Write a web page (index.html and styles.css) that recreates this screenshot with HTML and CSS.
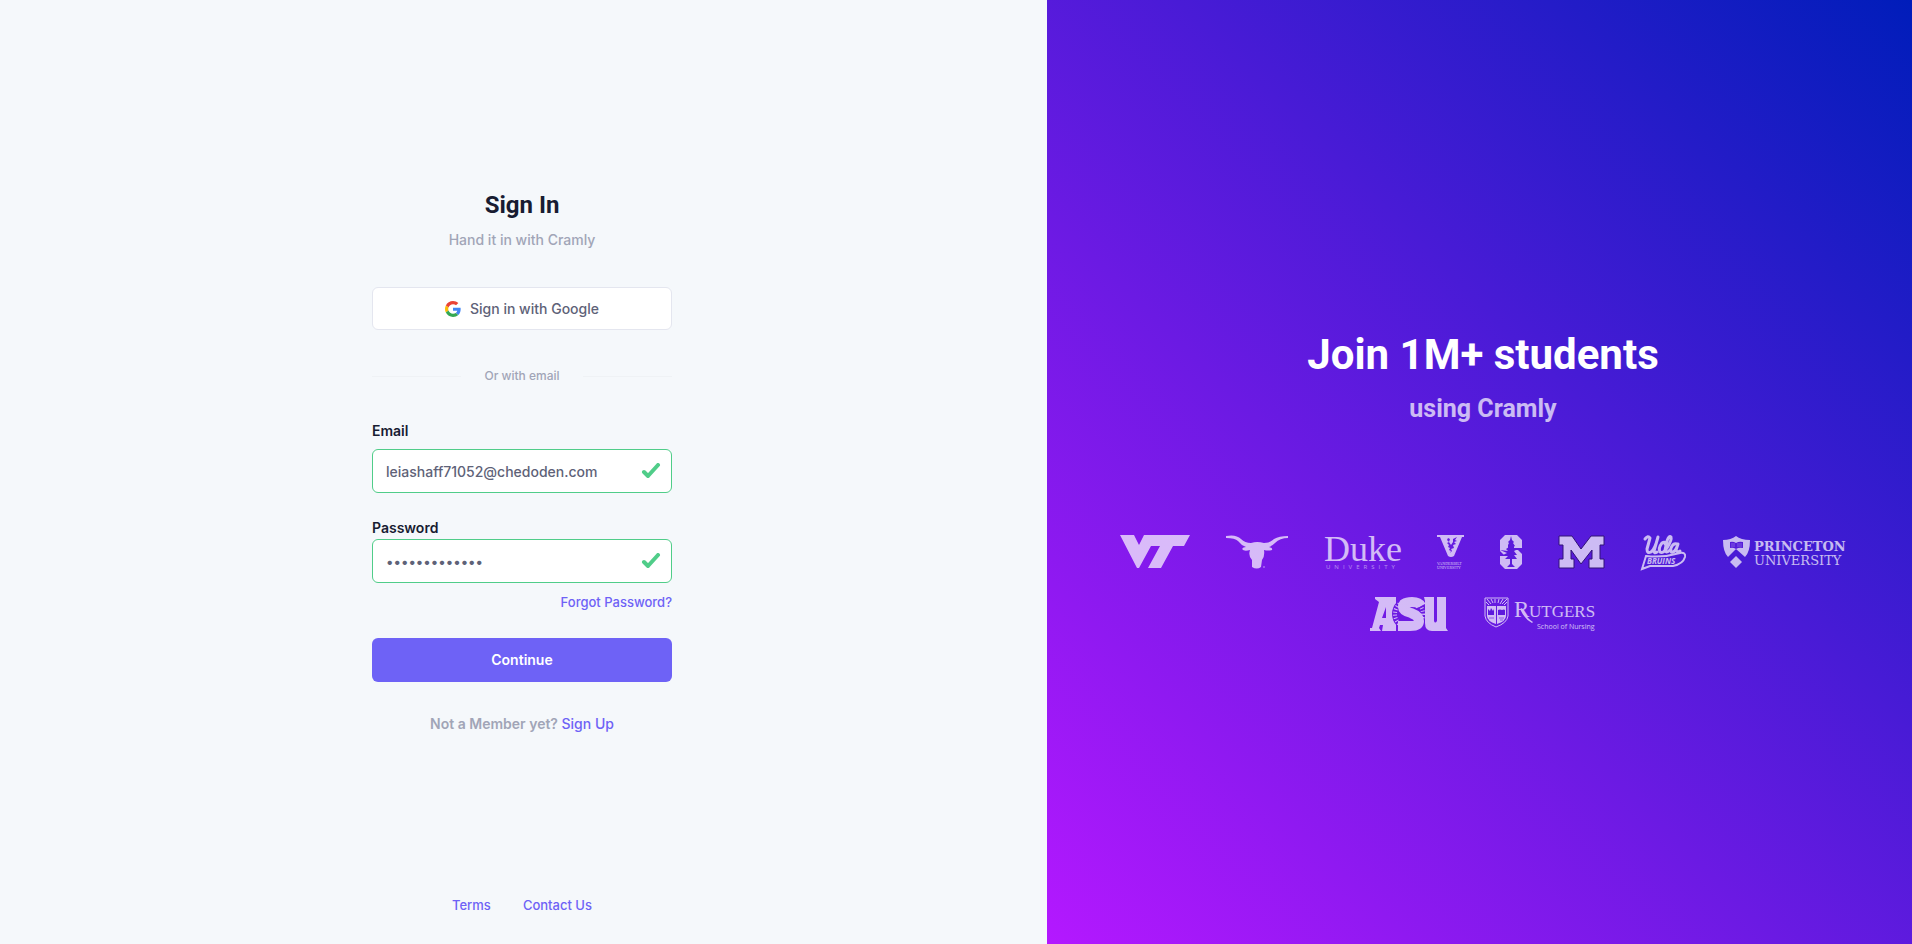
FILE: index.html
```
<!DOCTYPE html>
<html lang="en">

<head>
  <meta charset="UTF-8">
  <meta name="viewport" content="width=device-width, initial-scale=1">
  <title>Cramly - Sign In</title>
  <link rel="stylesheet" href="styles.css">
</head>

<body>
  <main class="auth">
    <section class="form-side">
      <form class="sign-in">
        <h1 class="title">Sign In</h1>
        <p class="subtitle">Hand it in with Cramly</p>

        <button type="button" class="btn btn-google">
          <svg class="google-icon" viewBox="0 0 48 48">
            <path fill="#EA4335" d="M24 9.5c3.54 0 6.71 1.22 9.21 3.6l6.85-6.85C35.9 2.38 30.47 0 24 0 14.62 0 6.51 5.38 2.56 13.22l7.98 6.19C12.43 13.72 17.74 9.5 24 9.5z"/>
            <path fill="#4285F4" d="M46.98 24.55c0-1.57-.15-3.09-.38-4.55H24v9.02h12.94c-.58 2.96-2.26 5.48-4.78 7.18l7.73 6c4.51-4.18 7.09-10.36 7.09-17.65z"/>
            <path fill="#FBBC05" d="M10.53 28.59c-.48-1.45-.76-2.99-.76-4.59s.27-3.14.76-4.59l-7.98-6.19C.92 16.46 0 20.12 0 24c0 3.88.92 7.54 2.56 10.78l7.97-6.19z"/>
            <path fill="#34A853" d="M24 48c6.48 0 11.93-2.13 15.89-5.81l-7.73-6c-2.15 1.45-4.92 2.3-8.16 2.3-6.26 0-11.57-4.22-13.47-9.91l-7.98 6.19C6.51 42.62 14.62 48 24 48z"/>
          </svg>
          Sign in with Google
        </button>

        <div class="separator">Or with email</div>

        <div class="field">
          <label for="email">Email</label>
          <div class="control">
            <input type="email" id="email" value="leiashaff71052@chedoden.com">
            <svg class="check" viewBox="0 0 20 16"><path d="M3 9L7 13L17 2"/></svg>
          </div>
        </div>

        <div class="field field-password">
          <label for="password">Password</label>
          <div class="control">
            <input type="password" id="password" value="abcdefghijklm">
            <svg class="check" viewBox="0 0 20 16"><path d="M3 9L7 13L17 2"/></svg>
          </div>
        </div>

        <a class="forgot" href="#">Forgot Password?</a>
        <button type="submit" class="btn btn-primary">Continue</button>
        <p class="member">Not a Member yet? <a href="#">Sign Up</a></p>
      </form>

      <footer class="links">
        <a href="#">Terms</a>
        <a href="#">Contact Us</a>
      </footer>
    </section>

    <section class="promo">
      <h2 class="promo-title">Join 1M+ students</h2>
      <p class="promo-sub">using Cramly</p>

      <div class="logos">
        <!-- Virginia Tech -->
        <svg width="70" height="34" viewBox="0 0 70 34">
          <path d="M0 0H14L19 10L24 0H70L64 11H53L41 33H28L40 11H31L19 33H17Z"/>
        </svg>

        <!-- Texas -->
        <svg width="62" height="35" viewBox="0 0 62 35">
          <path d="M0 1Q10-1 15 4Q19 8 25 8Q31 6 38 8Q44 8 48 4Q53 1 62 1V3Q54 3 49 8Q46 11 43 12Q47 13 46 15Q42 16 38 15Q39 21 36 25L35 32Q31 35 26 32L26 25Q22 21 24 15Q18 17 16 14Q17 12 20 12Q15 10 12 6Q9 3 0 3Z"/>
          <circle cx="38" cy="32" r="1" opacity=".5"/>
        </svg>

        <!-- Duke -->
        <svg width="77" height="36" viewBox="0 0 77 36">
          <text class="serif" x="0" y="26" font-size="36">Duke</text>
          <text class="sans tracked" x="2" y="34" font-size="6">UNIVERSITY</text>
        </svg>

        <!-- Vanderbilt -->
        <svg width="27" height="35" viewBox="0 0 27 35">
          <path fill-rule="evenodd" d="M0 0H27V2H25L17 21Q14 23 11 21L3 2H0ZM11 3L10 5L12 7L10 8L12 10L11 12L13 13L12 15L14 16L13 18L15 16L14 14L17 13L16 10L19 9L17 7L20 6L18 5L20 2L16 4L16 7L14 10L12 7L13 4Z"/>
          <text class="serif" x="0" y="30" font-size="4">VANDERBILT</text>
          <text class="serif" x="0" y="34" font-size="4">UNIVERSITY</text>
        </svg>

        <!-- Stanford -->
        <svg width="22" height="34" viewBox="0 0 22 34">
          <path d="M5 0H17L22 5V13H14V10H8V13L14 15H18L22 19V29L17 34H5L0 29V21H8V24H14V22L8 20H4L0 16V5Z"/>
          <path class="cut" d="M11 1L12 5L14 7L13 8L15 11L13 12L16 15L14 16L17 20L14 20L17 24L12 24L12 29L15 32H7L10 29L10 24L5 24L8 21L3 20L7 18L0 15L8 16L6 14L9 12L8 10L9 8L8 7L10 5Z"/>
        </svg>

        <!-- Michigan -->
        <svg width="47" height="34" viewBox="0 0 47 34">
          <path class="outline" d="M1 1H14L23 14L33 1H46V10H42V24H46V33H31V24H34V15L23 29L13 15V24H16V33H1V24H5V10H1Z"/>
        </svg>

        <!-- UCLA Bruins -->
        <svg width="46" height="35" viewBox="0 0 46 35">
          <g fill="none" stroke="#fff" stroke-width="3" stroke-linecap="round" stroke-linejoin="round">
            <path d="M4 4Q7 0 9 3L6 14Q6 19 10 17Q14 14 17 2L13 16Q13 19 16 17"/>
            <path d="M24 9Q24 6 21 8Q17 13 19 17Q22 19 26 13Q31 5 30 2Q28 0 26 6L24 15Q25 19 29 15"/>
            <path d="M36 9Q32 8 30 13Q29 18 32 17Q35 16 37 9L35 15Q36 18 39 16"/>
          </g>
          <path fill="none" stroke="#fff" stroke-width="2" d="M5 21Q22 23 39 18Q45 17 44 22Q42 29 32 31L9 31L1 34L5 21Z"/>
          <text class="sans bruins" x="6" y="29" font-size="8">BRUINS</text>
        </svg>

        <!-- Princeton -->
        <svg width="123" height="34" viewBox="0 0 123 34">
          <path d="M0 5Q8 5 13 1Q18 5 27 5Q27 17 22 22L13 14L5 22Q0 17 0 5Z"/>
          <path d="M13 21L19 27L13 33L7 27Z"/>
          <path class="cut" d="M7 7Q10 6 13 8Q16 6 20 7V13Q16 12 13 14Q10 12 7 13Z"/>
          <path d="M8 9H12M8 11H12M14 9H19M14 11H19" stroke="#fff" stroke-width="1" opacity=".4"/>
          <text class="wide-serif bold" x="31" y="16" font-size="13">PRINCETON</text>
          <text class="wide-serif" x="31" y="30" font-size="13">UNIVERSITY</text>
        </svg>

        <!-- Arizona State -->
        <svg width="78" height="35" viewBox="0 0 78 35">
          <path fill-rule="evenodd" d="M5 0H26V34H12L13 28H10L9 31L11 34H0V31H2L9 5L5 2ZM16 10L12 21H16Z"/>
          <circle class="sun" cx="39" cy="17" r="17"/>
          <circle class="rays" cx="39" cy="17" r="14"/>
          <path class="letter-s" d="M51 9Q49 5 42 5Q33 5 33 10Q33 14 41 16Q49 19 49 24Q49 29 40 29H28"/>
          <path d="M54 0H64V24Q65 27 67 24V0H76V31L78 34H62Q55 34 55 26V4Z"/>
        </svg>

        <!-- Rutgers -->
        <svg width="113" height="36" viewBox="0 0 113 36">
          <path fill="none" stroke="#fff" stroke-width="1" d="M1 1H24V19Q23 26 12 30Q2 26 1 19Z"/>
          <path d="M3 9H12V27Q3 24 3 19ZM13 9H22V19Q22 24 13 27Z"/>
          <path fill="none" stroke="#fff" stroke-width="1" d="M3 2L7 7M7 2L9 6M11 2V6M15 2L14 6M19 2L16 7M23 2L18 7M2 5L5 8M23 5L20 8"/>
          <path class="cut" d="M4 12L6 14L7 11L9 14L10 12V18H4ZM14 13Q16 12 18 13Q20 12 21 13V18H14Z"/>
          <path fill="none" stroke="#5a1bdc" stroke-width="1" opacity=".6" d="M5 21H10M15 21H20M16 23H19"/>
          <text class="serif" x="30" y="20" font-size="23">R</text>
          <path d="M38 11Q42 21 49 25L48 26Q41 23 36 12Z"/>
          <text class="serif" x="45" y="20" font-size="17">UTGERS</text>
          <text class="sans" x="53" y="32" font-size="7">School of Nursing</text>
        </svg>
      </div>
    </section>
  </main>
</body>

</html>
```
FILE: styles.css
```
* {
  box-sizing: border-box;
}

body {
  margin: 0;
  font-family: Inter, "Liberation Sans", sans-serif;
  font-size: 14px;
  line-height: 20px;
  color: #181c32;
}

h1, h2, p {
  margin: 0;
}

a {
  color: #6e62f6;
  font-weight: 500;
  text-decoration: none;
}

.auth {
  display: flex;
  min-height: 100vh;
}

/* left side */
.form-side {
  flex: 1;
  display: flex;
  flex-direction: column;
  align-items: center;
  padding: 188px 3px 29px 0;
  background: #f5f8fb;
}

.sign-in {
  display: flex;
  flex-direction: column;
  width: 300px;
}

.title {
  font-family: Roboto, sans-serif;
  font-size: 24px;
  line-height: 34px;
  text-align: center;
}

.subtitle {
  margin-top: 8px;
  color: #a1a5b7;
  font-weight: 500;
  text-align: center;
}

.btn {
  display: flex;
  align-items: center;
  justify-content: center;
  gap: 9px;
  height: 44px;
  padding: 0 0 1px;
  border: none;
  border-radius: 6px;
  font-family: inherit;
  font-size: 14px;
  cursor: pointer;
}

.btn-google {
  margin-top: 37px;
  height: 43px;
  padding: 0;
  border: 1px solid #e4e6ef;
  background: #fff;
  color: #5e6278;
  font-weight: 500;
}

.google-icon {
  width: 16px;
  height: 16px;
}

.separator {
  display: flex;
  align-items: center;
  justify-content: space-between;
  margin-top: 36px;
  color: #a1a5b7;
  font-size: 12px;
  font-weight: 500;
}

.separator::before,
.separator::after {
  content: "";
  width: 89px;
  border-bottom: 1px solid #eff2f5;
}

.field {
  display: flex;
  flex-direction: column;
  gap: 8px;
  margin-top: 35px;
}

.field label {
  font-weight: 600;
}

.field-password {
  gap: 1px;
  margin-top: 25px;
}

.control {
  position: relative;
}

.control input {
  display: block;
  width: 100%;
  height: 44px;
  padding: 0 40px 0 13px;
  border: 1px solid #50cd89;
  border-radius: 6px;
  background: #fff;
  color: #5e6278;
  font-family: inherit;
  font-size: 14px;
  font-weight: 500;
  outline: none;
}

.check {
  position: absolute;
  top: 14px;
  right: 11px;
  width: 20px;
  height: 16px;
  fill: none;
  stroke: #50cd89;
  stroke-width: 4;
  stroke-linecap: round;
  stroke-linejoin: round;
}

.forgot {
  align-self: flex-end;
  margin-top: 9px;
  font-size: 13px;
}

.btn-primary {
  margin-top: 26px;
  background: #6e62f6;
  color: #fff;
  font-weight: 600;
}

.member {
  margin-top: 32px;
  color: #a1a5b7;
  font-weight: 600;
  text-align: center;
}

.links {
  display: flex;
  gap: 32px;
  margin-top: auto;
  font-size: 13px;
}

/* right side */
.promo {
  width: 865px;
  padding: 325px 62px 0 69px;
  background: linear-gradient(45deg, #b418ff, #001dba);
  text-align: center;
}

.promo-title {
  font-family: Roboto, sans-serif;
  font-size: 42px;
  line-height: 60px;
  color: #fff;
}

.promo-sub {
  margin-top: 6px;
  font-family: Roboto, sans-serif;
  font-size: 25px;
  line-height: 36px;
  font-weight: 700;
  color: #fff;
  opacity: .7;
}

.logos {
  display: flex;
  flex-wrap: wrap;
  justify-content: center;
  column-gap: 36px;
  row-gap: 26px;
  margin-top: 108px;
  opacity: .7;
}

.logos svg {
  fill: #fff;
  overflow: visible;
}

.logos .serif {
  font-family: "Liberation Serif", serif;
}

.logos .wide-serif {
  font-family: "DejaVu Serif", serif;
}

.logos .sans {
  font-family: "Open Sans", sans-serif;
}

.logos .tracked {
  letter-spacing: 4px;
  opacity: .7;
}

.logos .bold {
  font-weight: 700;
}

.logos .bruins {
  font-weight: 700;
  font-style: italic;
}

.logos .cut {
  fill: #5a1bdc;
}

.logos .outline {
  stroke: #23104f;
  stroke-width: 1;
}

.logos .sun {
  fill: #6b1be2;
}

.logos .rays {
  fill: none;
  stroke: #fff;
  stroke-width: 4;
  stroke-dasharray: 1 2;
}

.logos .letter-s {
  fill: none;
  stroke: #fff;
  stroke-width: 10;
}
```
